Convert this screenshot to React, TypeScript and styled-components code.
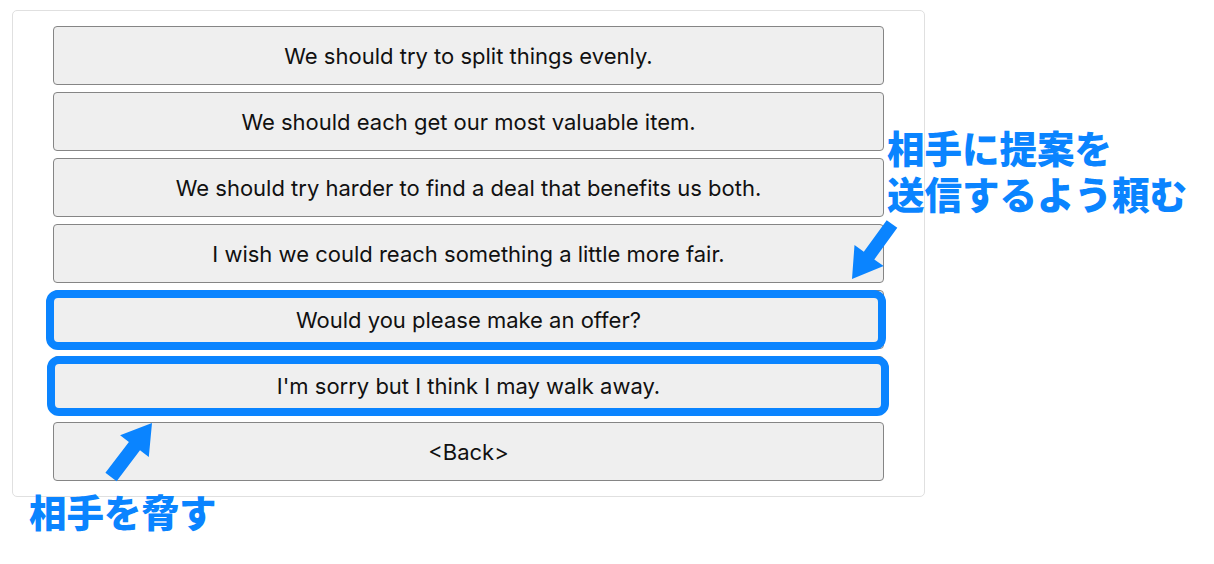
import React from "react";
import styled, { createGlobalStyle, css } from "styled-components";

const Global = createGlobalStyle`
  html, body { margin: 0; padding: 0; background: #ffffff; }
  body { font-family: Inter, "Liberation Sans", Arial, sans-serif; }
`;

const Page = styled.div`
  position: relative;
  width: 1214px;
  height: 564px;
  padding: 10px 0 0 12px;
  box-sizing: border-box;
  overflow: hidden;
`;

const Panel = styled.div`
  width: 913px;
  height: 487px;
  box-sizing: border-box;
  border: 1px solid #e0e0e0;
  border-radius: 5px;
  padding: 15px 40px 0 40px;
  display: flex;
  flex-direction: column;
  gap: 7px;
`;

type Mark = { t: number; r: number; b: number; l: number };

const Choice = styled.button<{ $mark?: Mark }>`
  position: relative;
  height: 59px;
  width: 100%;
  box-sizing: border-box;
  border: 1px solid #858585;
  border-radius: 4px;
  background: #efefef;
  color: #111;
  font-family: Inter, "Liberation Sans", Arial, sans-serif;
  font-size: 22px;
  font-weight: 400;
  padding: 0;
  display: flex;
  align-items: center;
  justify-content: center;
  cursor: pointer;
  ${(p) =>
    p.$mark &&
    css`
      &::after {
        content: "";
        position: absolute;
        top: ${-p.$mark.t - 1}px;
        right: ${-p.$mark.r - 1}px;
        bottom: ${-p.$mark.b - 1}px;
        left: ${-p.$mark.l - 1}px;
        border: 8px solid #0a84ff;
        border-radius: 12px;
        pointer-events: none;
      }
    `}
`;

const Note = styled.div<{ $x: number; $y: number }>`
  position: absolute;
  left: ${(p) => p.$x}px;
  top: ${(p) => p.$y}px;
  display: flex;
  flex-direction: column;
  color: #0a84ff;
  font-family: "Noto Sans CJK JP", sans-serif;
  font-weight: 900;
  font-size: 37.5px;
  white-space: nowrap;
  pointer-events: none;
`;

const NoteLine = styled.span`
  display: block;
  height: 46px;
  line-height: 46px;
`;

const ArrowLayer = styled.svg`
  position: absolute;
  left: 0;
  top: 0;
  width: 1214px;
  height: 564px;
  pointer-events: none;
`;

function arrow(tx: number, ty: number, px: number, py: number, sw: number, hw: number, hl: number) {
  const dx = px - tx;
  const dy = py - ty;
  const len = Math.hypot(dx, dy);
  const ux = dx / len;
  const uy = dy / len;
  const nx = -uy;
  const ny = ux;
  const bx = px - hl * ux;
  const by = py - hl * uy;
  const pts = [
    [tx + sw * nx, ty + sw * ny],
    [bx + sw * nx, by + sw * ny],
    [bx + hw * nx, by + hw * ny],
    [px, py],
    [bx - hw * nx, by - hw * ny],
    [bx - sw * nx, by - sw * ny],
    [tx - sw * nx, ty - sw * ny],
  ];
  return pts.map((p) => `${p[0].toFixed(1)},${p[1].toFixed(1)}`).join(" ");
}

const choices: { text: string; mark?: Mark }[] = [
  { text: "We should try to split things evenly." },
  { text: "We should each get our most valuable item." },
  { text: "We should try harder to find a deal that benefits us both." },
  { text: "I wish we could reach something a little more fair." },
  { text: "Would you please make an offer?", mark: { t: 0, r: 2, b: 1, l: 7 } },
  { text: "I'm sorry but I think I may walk away.", mark: { t: 0, r: 5, b: 1, l: 6 } },
  { text: "<Back>" },
];

export default function App() {
  return (
    <>
      <Global />
      <Page>
        <Panel>
          {choices.map((c) => (
            <Choice key={c.text} $mark={c.mark}>
              {c.text}
            </Choice>
          ))}
        </Panel>
        <Note $x={887} $y={124}>
          <NoteLine>相手に提案を</NoteLine>
          <NoteLine>送信するよう頼む</NoteLine>
        </Note>
        <Note $x={29} $y={488}>
          <NoteLine>相手を脅す</NoteLine>
        </Note>
        <ArrowLayer viewBox="0 0 1214 564">
          <polygon points={arrow(892, 224, 852, 279, 6.5, 18, 29)} fill="#0a84ff" />
          <polygon points={arrow(111, 477, 152, 423, 7, 18, 29)} fill="#0a84ff" />
        </ArrowLayer>
      </Page>
    </>
  );
}
